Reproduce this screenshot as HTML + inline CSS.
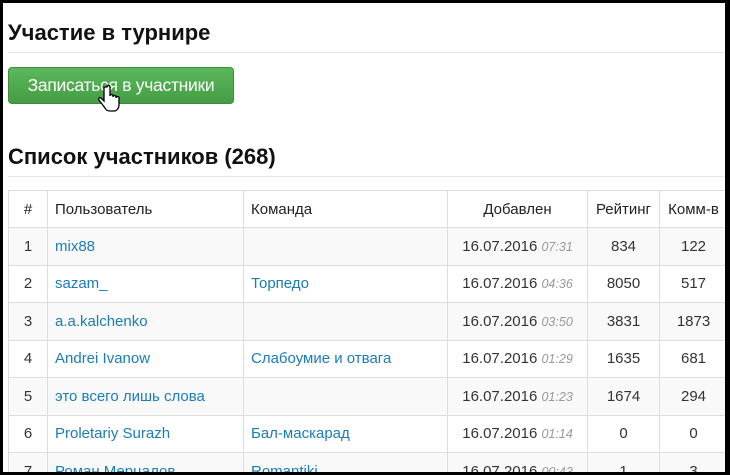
<!DOCTYPE html>
<html><head><meta charset="utf-8"><style>
*{margin:0;padding:0;box-sizing:border-box}
body{width:730px;height:475px;background:#000;overflow:hidden;font-family:"Liberation Sans",sans-serif;position:relative}
.page{position:absolute;left:3px;top:3px;width:722px;height:469px;background:#fff;overflow:hidden}
h1{position:absolute;left:5px;top:17px;font-size:22px;font-weight:bold;color:#111}
h2{position:absolute;left:5px;top:141px;font-size:22px;font-weight:bold;color:#111}
.hr{position:absolute;left:5px;right:0;height:1px;background:#e6e6e6}
.btn{position:absolute;left:5px;top:64px;width:226px;height:37px;border-radius:4px;background:linear-gradient(#5cb85c,#449d44);border:1px solid #3d8b3d;color:#fff;font-size:17.5px;line-height:35px;text-align:center;letter-spacing:-0.3px}
table{position:absolute;left:5px;top:187px;width:720px;border-collapse:collapse;font-size:15px;color:#333}
td,th{border:1px solid #ddd;height:37.5px;padding:0 7px;text-align:left}
th{font-weight:normal;color:#222;height:37px}
tr:nth-child(even) td{background:#f9f9f9}
.c{text-align:center}.r{text-align:right}
a{color:#1a7cb8}
i{color:#999;font-size:12.5px}
</style></head><body><div class="page">
<h1>Участие в турнире</h1>
<div class="hr" style="top:49px"></div>
<div class="btn">Записаться в участники</div>
<svg style="position:absolute;left:94px;top:82px" width="24" height="30" viewBox="0 0 24 30"><path d="M7 2v14l-3-3c-2-1-3 1-2 2l6 8c1 2 3 3 5 3h4c3 0 5-3 5-6v-7c0-2-3-2-3 0v-1c0-2-3-2-3 0v-1c0-2-3-2-3 0V2c0-2-3-2-3 0z" fill="#fff" stroke="#000" stroke-width="1.3"/></svg>
<h2>Список участников (268)</h2>
<div class="hr" style="top:173px"></div>
<table>
<tr><th class="c" style="width:39px">#</th><th style="width:196px">Пользователь</th><th style="width:204px">Команда</th><th class="c" style="width:140px">Добавлен</th><th class="c" style="width:72px">Рейтинг</th><th class="c">Комм-в</th></tr>
<tr><td class="c">1</td><td><a>mix88</a></td><td></td><td class="c">16.07.2016 <i>07:31</i></td><td class="c">834</td><td class="c">122</td></tr>
<tr><td class="c">2</td><td><a>sazam_</a></td><td><a>Торпедо</a></td><td class="c">16.07.2016 <i>04:36</i></td><td class="c">8050</td><td class="c">517</td></tr>
<tr><td class="c">3</td><td><a>a.a.kalchenko</a></td><td></td><td class="c">16.07.2016 <i>03:50</i></td><td class="c">3831</td><td class="c">1873</td></tr>
<tr><td class="c">4</td><td><a>Andrei Ivanow</a></td><td><a>Слабоумие и отвага</a></td><td class="c">16.07.2016 <i>01:29</i></td><td class="c">1635</td><td class="c">681</td></tr>
<tr><td class="c">5</td><td><a>это всего лишь слова</a></td><td></td><td class="c">16.07.2016 <i>01:23</i></td><td class="c">1674</td><td class="c">294</td></tr>
<tr><td class="c">6</td><td><a>Proletariy Surazh</a></td><td><a>Бал-маскарад</a></td><td class="c">16.07.2016 <i>01:14</i></td><td class="c">0</td><td class="c">0</td></tr>
<tr><td class="c">7</td><td><a>Роман Мерцалов</a></td><td><a>Romantiki</a></td><td class="c">16.07.2016 <i>00:43</i></td><td class="c">1</td><td class="c">3</td></tr>
</table>
</div></body></html>
